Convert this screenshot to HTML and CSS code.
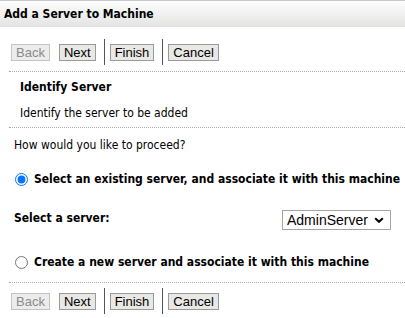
FILE: index.html
```html
<!DOCTYPE html>
<html>
<head>
    <title>Add a Server to Machine</title>
    <link rel="stylesheet" href="styles.css">
</head>
<body>
    <div class="title-bar">Add a Server to Machine</div>

    <div class="toolbar">
        <button class="btn" disabled>Back</button>
        <button class="btn btn-next">Next</button>
        <span class="sep"></span>
        <button class="btn">Finish</button>
        <span class="sep"></span>
        <button class="btn">Cancel</button>
    </div>

    <div class="dotted"></div>

    <div class="step">
        <div class="step-title">Identify Server</div>
        <div class="step-desc">Identify the server to be added</div>
    </div>

    <div class="dotted"></div>

    <div class="question">How would you like to proceed?</div>

    <label class="choice choice-first">
        <input type="radio" name="mode" checked>
        <span>Select an existing server, and associate it with this machine</span>
    </label>

    <div class="server-row">
        <span class="server-label">Select a server:</span>
        <select class="server-select">
            <option>AdminServer</option>
        </select>
    </div>

    <label class="choice choice-second">
        <input type="radio" name="mode">
        <span>Create a new server and associate it with this machine</span>
    </label>

    <div class="dotted dotted-bottom"></div>

    <div class="toolbar toolbar-bottom">
        <button class="btn" disabled>Back</button>
        <button class="btn btn-next">Next</button>
        <span class="sep"></span>
        <button class="btn">Finish</button>
        <span class="sep"></span>
        <button class="btn">Cancel</button>
    </div>
</body>
</html>
```

FILE: styles.css
```css
:root {
    --text-color: #000000;
    --dots-color: #a8a8a8;
    --btn-border: #9a9a9a;
    --btn-bg: #e8e8e5;
    --sep-color: #555555;
}

body {
    font-family: "DejaVu Sans Condensed", "DejaVu Sans", sans-serif;
    font-size: 12px;
    color: var(--text-color);
    background: #ffffff;
    margin: 0;
    overflow: hidden;
}

.title-bar {
    height: 26px;
    line-height: 26px;
    padding-left: 4px;
    border-top: 1px solid #c5c9cd;
    background: linear-gradient(#fdfdfd, #e3e4e2);
    font-weight: bold;
}

.toolbar {
    display: flex;
    align-items: center;
    height: 26px;
    margin-top: 12px;
    padding-left: 11px;
}

.toolbar-bottom {
    margin-top: 5px;
}

.btn {
    font-family: "Liberation Sans", Arial, sans-serif;
    font-size: 13px;
    line-height: 15px;
    height: 17px;
    padding: 0 4px;
    margin: 0;
    color: #000;
    background: var(--btn-bg);
    border: 1px solid var(--btn-border);
    border-radius: 0;
}

.btn:disabled {
    color: #8a8a8a;
    border-color: #c4c4c4;
    background: #ececea;
}

.btn-next {
    margin-left: 9px;
}

.sep {
    width: 1px;
    height: 26px;
    background: var(--sep-color);
    margin: 0 5px 0 8px;
}

.dotted {
    margin: 6px 0 0 9px;
    border-top: 1px dotted var(--dots-color);
}

.step {
    padding: 7px 0 0 20px;
}

.step-title {
    font-weight: bold;
    line-height: 16px;
}

.step-desc {
    line-height: 16px;
    margin-top: 10px;
}

.question {
    padding-left: 14px;
    margin-top: 9px;
    line-height: 16px;
}

.choice {
    display: flex;
    align-items: center;
    height: 20px;
    padding-left: 15px;
    font-weight: bold;
}

.choice input {
    width: 13px;
    height: 13px;
    margin: 0 6px 0 0;
}

.choice-first {
    margin-top: 16px;
}

.choice-second {
    margin-top: 22px;
}

.server-row {
    display: flex;
    justify-content: space-between;
    align-items: center;
    height: 20px;
    margin-top: 21px;
    padding: 0 14px;
}

.server-label {
    font-weight: bold;
    margin-top: -4px;
}

.server-select {
    appearance: none;
    font-family: "Liberation Sans", Arial, sans-serif;
    font-size: 14px;
    width: 109px;
    height: 20px;
    padding: 0 0 0 4px;
    border: 1px solid #a5a5a5;
    border-radius: 0;
    color: #000;
    background: #fff url("data:image/svg+xml,%3Csvg xmlns='http://www.w3.org/2000/svg' width='10' height='6' viewBox='0 0 10 6'%3E%3Cpath d='M1.2 1.2 5 4.8 8.8 1.2' fill='none' stroke='%23000' stroke-width='2'/%3E%3C/svg%3E") no-repeat right 6px center;
}

.dotted-bottom {
    margin-top: 10px;
}
```
